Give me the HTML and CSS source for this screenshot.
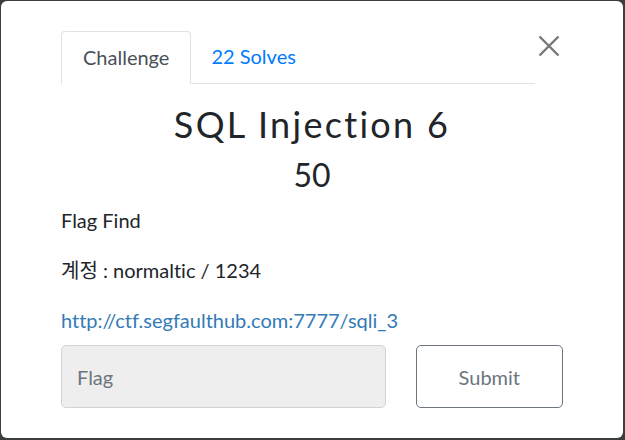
FILE: index.html
```html
<!DOCTYPE html>
<html lang="ko">
<head>
<meta charset="utf-8">
<link rel="stylesheet" href="styles.css">
</head>
<body>
<div class="modal">
  <div class="top">
    <ul class="tabs">
      <li class="tab active">Challenge</li>
      <li class="tab link">22 Solves</li>
    </ul>
    <button class="close" aria-label="Close">
      <svg width="22" height="22" viewBox="0 0 22 22"><path d="M1.5 1.5 L20.5 20.5 M20.5 1.5 L1.5 20.5" stroke="#777" stroke-width="2.4" fill="none"/></svg>
    </button>
  </div>
  <h2 class="title">SQL Injection 6</h2>
  <h3 class="value">50</h3>
  <div class="desc">
    <p>Flag Find</p>
    <p>계정 : normaltic / 1234</p>
    <p class="last"><a href="#">http://ctf.segfaulthub.com:7777/sqli_3</a></p>
  </div>
  <div class="form">
    <input class="flag" type="text" placeholder="Flag">
    <button class="submit">Submit</button>
  </div>
</div>
</body>
</html>
```
FILE: styles.css
```css
html, body { margin: 0; padding: 0; }
body {
  background: #3b3f3b;
  width: 625px;
  height: 440px;
  padding: 1px 2px 2px 1px;
  box-sizing: border-box;
  font-family: Lato, "Noto Sans CJK KR", sans-serif;
  font-variant-ligatures: none;
}
.modal {
  background: #fff;
  border-radius: 6px;
  height: 437px;
  box-sizing: border-box;
  padding: 30px 60px 0 60px;
  color: #212529;
}
.top {
  display: flex;
  align-items: flex-start;
}
.tabs {
  list-style: none;
  margin: 0;
  padding: 0;
  display: flex;
  width: 474px;
  border-bottom: 1px solid #dee2e6;
}
.tab {
  font-size: 20px;
  padding: 0 21px;
  height: 51px;
  line-height: 51px;
  margin-bottom: -1px;
}
.tab.active {
  border: 1px solid #dee2e6;
  border-bottom-color: #fff;
  border-radius: 4px 4px 0 0;
  color: #495057;
}
.tab.link {
  color: #007bff;
  padding-left: 20px;
}
.close {
  margin-left: 3px;
  margin-top: 4px;
  background: none;
  border: 0;
  padding: 0;
  width: 22px;
  height: 22px;
}
.close svg { display: block; }
.title {
  text-align: center;
  font-weight: 400;
  font-size: 36px;
  letter-spacing: 2.3px;
  margin: 18px 0 0;
  line-height: 44px;
}
.value {
  text-align: center;
  font-weight: 400;
  font-size: 32px;
  margin: 9px 0 0;
  line-height: 40px;
}
.desc {
  font-size: 20px;
  margin-top: 10px;
}
.desc p {
  margin: 0 0 20px;
  line-height: 30px;
}
.desc p.last { margin-bottom: 10px; }
.desc a {
  color: #337ab7;
  text-decoration: none;
}
.form {
  display: flex;
  gap: 30px;
}
.flag {
  width: 326px;
  height: 63px;
  box-sizing: border-box;
  background: #eeeeee;
  border: 1px solid #ced4da;
  border-radius: 5px;
  padding: 0 15px;
  font-family: Lato, sans-serif;
  font-size: 20px;
}
.flag::placeholder { color: #6c757d; }
.submit {
  width: 148px;
  height: 63px;
  box-sizing: border-box;
  background: #fff;
  border: 1px solid #6c757d;
  border-radius: 5px;
  color: #6c757d;
  font-family: Lato, sans-serif;
  font-size: 20px;
}
```
